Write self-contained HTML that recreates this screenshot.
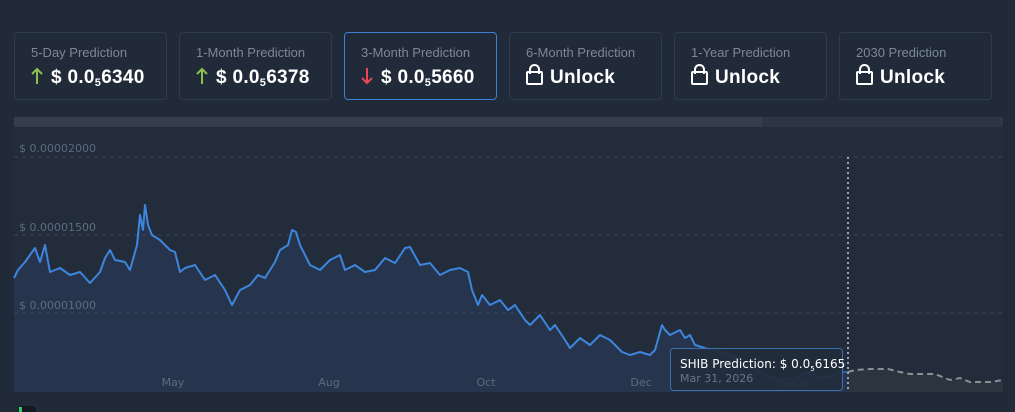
<!DOCTYPE html>
<html><head><meta charset="utf-8"><style>
body{margin:0;width:1015px;height:412px;background:#202a39;font-family:"Liberation Sans",sans-serif;overflow:hidden;position:relative}
.card{position:absolute;top:32px;width:153px;height:68px;border:1px solid #2f3a4a;border-radius:4px;box-sizing:border-box;background:#202a39}
.card.sel{border-color:#3b82d6}
.t{position:absolute;left:16px;top:12px;font-size:13px;color:#7d8796}
.v{position:absolute;left:16px;top:34px;font-size:19px;font-weight:bold;color:#fff;white-space:nowrap;letter-spacing:0.3px}
.v sub{font-size:11px;vertical-align:-3px}
.ar{display:inline-block;vertical-align:-2px;margin-right:8px}
.lk{display:inline-block;width:13px;height:10px;border:2px solid #fff;border-radius:2px;position:relative;top:2px;margin-right:7px}
.lk:before{content:"";position:absolute;left:1px;top:-9px;width:7px;height:8px;border:2px solid #fff;border-bottom:none;border-radius:6px 6px 0 0}
</style></head><body>
<div class="card" style="left:14px"><div class="t">5-Day Prediction</div><div class="v"><svg class="ar" width="12" height="18" viewBox="0 0 12 18"><path d="M6 17V2M1 7L6 2L11 7" stroke="#8cc152" stroke-width="2" fill="none"/></svg>$ 0.0<sub>5</sub>6340</div></div>
<div class="card" style="left:179px"><div class="t">1-Month Prediction</div><div class="v"><svg class="ar" width="12" height="18" viewBox="0 0 12 18"><path d="M6 17V2M1 7L6 2L11 7" stroke="#8cc152" stroke-width="2" fill="none"/></svg>$ 0.0<sub>5</sub>6378</div></div>
<div class="card sel" style="left:344px"><div class="t">3-Month Prediction</div><div class="v"><svg class="ar" width="12" height="18" viewBox="0 0 12 18"><path d="M6 1V16M1 11L6 16L11 11" stroke="#e8485a" stroke-width="2" fill="none"/></svg>$ 0.0<sub>5</sub>5660</div></div>
<div class="card" style="left:509px"><div class="t">6-Month Prediction</div><div class="v"><span class="lk"></span>Unlock</div></div>
<div class="card" style="left:674px"><div class="t">1-Year Prediction</div><div class="v"><span class="lk"></span>Unlock</div></div>
<div class="card" style="left:839px"><div class="t">2030 Prediction</div><div class="v"><span class="lk"></span>Unlock</div></div>
<svg width="1015" height="412" style="position:absolute;left:0;top:0" font-family="DejaVu Sans, sans-serif">
<rect x="14" y="117" width="748" height="10" fill="#343e4c"/>
<rect x="762" y="117" width="241" height="10" fill="#2c3644"/>
<rect x="14" y="127" width="989" height="265" fill="#222c3b"/>
<polygon fill="#26354d" points="14,392 14,278 18,270 25,262 35,248 40,262 45,245 50,272 60,268 70,275 80,272 90,283 100,272 105,258 110,250 115,260 125,262 130,270 137,245 140,215 143,230 145,205 148,225 152,235 160,240 170,250 175,252 180,272 185,268 195,265 205,280 215,275 225,290 232,305 240,290 250,285 258,275 265,278 275,262 280,250 288,245 292,230 296,232 300,245 310,265 320,270 330,260 340,255 345,270 355,265 365,272 375,270 385,258 395,263 405,248 410,247 420,265 430,263 440,275 450,270 460,268 468,272 472,290 478,305 482,295 490,305 500,300 508,310 515,305 525,320 530,325 540,315 550,330 555,325 565,340 570,348 580,338 590,345 600,335 610,340 615,345 622,352 630,355 640,352 650,355 655,350 662,325 665,330 670,335 680,330 685,338 690,335 695,345 705,348 715,350 730,355 745,365 760,372 775,378 790,385 800,375 812,372 820,378 830,376 840,372 848,372 848,392"/>
<polygon fill="#2c3440" points="848,392 848,372 855,370 870,369 888,369 900,372 910,374 935,374 950,380 960,378 970,382 990,382 1003,380 1003,392"/>
<g stroke="#3a4555" stroke-dasharray="4 4"><line x1="14" y1="157" x2="1003" y2="157"/><line x1="14" y1="235" x2="1003" y2="235"/><line x1="14" y1="313" x2="1003" y2="313"/></g>
<g fill="#5e6b7c" font-size="11"><text x="19" y="152">$ 0.00002000</text><text x="19" y="231">$ 0.00001500</text><text x="19" y="309">$ 0.00001000</text></g>
<polyline fill="none" stroke="#3d86dc" stroke-width="2" stroke-linejoin="round" points="14,278 18,270 25,262 35,248 40,262 45,245 50,272 60,268 70,275 80,272 90,283 100,272 105,258 110,250 115,260 125,262 130,270 137,245 140,215 143,230 145,205 148,225 152,235 160,240 170,250 175,252 180,272 185,268 195,265 205,280 215,275 225,290 232,305 240,290 250,285 258,275 265,278 275,262 280,250 288,245 292,230 296,232 300,245 310,265 320,270 330,260 340,255 345,270 355,265 365,272 375,270 385,258 395,263 405,248 410,247 420,265 430,263 440,275 450,270 460,268 468,272 472,290 478,305 482,295 490,305 500,300 508,310 515,305 525,320 530,325 540,315 550,330 555,325 565,340 570,348 580,338 590,345 600,335 610,340 615,345 622,352 630,355 640,352 650,355 655,350 662,325 665,330 670,335 680,330 685,338 690,335 695,345 705,348"/>
<polyline fill="none" stroke="#3a5f8e" stroke-width="2" points="705,348 715,350 730,355 745,365 760,372 775,378 790,385 800,375 812,372 820,378 830,376 840,372 848,372"/>
<polyline fill="none" stroke="#8a8f96" stroke-width="2" stroke-dasharray="6 4" points="848,372 855,370 870,369 888,369 900,372 910,374 935,374 950,380 960,378 970,382 990,382 1003,380"/>
<line x1="848" y1="157" x2="848" y2="392" stroke="#9aa2ad" stroke-width="2" stroke-dasharray="2 3"/>
<g fill="#5e6b7c" font-size="11" text-anchor="middle"><text x="173" y="386">May</text><text x="329" y="386">Aug</text><text x="486" y="386">Oct</text><text x="641" y="386">Dec</text><text x="795" y="386">2026</text></g>
<rect x="670.5" y="348.5" width="172" height="42" rx="3" fill="#222c3bdd" stroke="#3b6fb0"/>
<text x="680" y="368" fill="#fff" font-size="12">SHIB Prediction: $ 0.0<tspan font-size="7" dy="3">5</tspan><tspan dy="-3">6165</tspan></text>
<text x="680" y="382" fill="#6b7585" font-size="11">Mar 31, 2026</text>
<rect x="18" y="406" width="18" height="8" rx="4" fill="#14181f"/><rect x="19" y="407" width="3" height="5" fill="#2ecc71"/>
</svg>
</body></html>
